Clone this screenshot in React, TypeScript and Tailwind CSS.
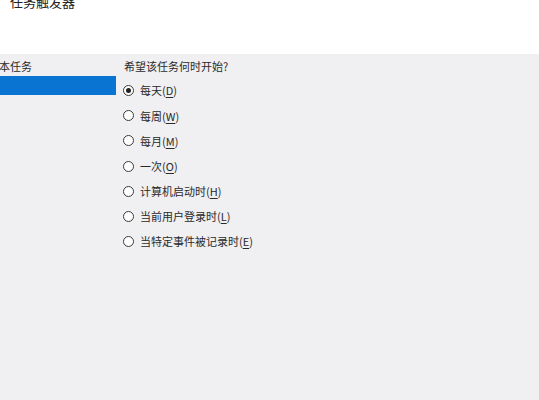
const options = [
  { label: "每天", key: "D", checked: true },
  { label: "每周", key: "W" },
  { label: "每月", key: "M" },
  { label: "一次", key: "O" },
  { label: "计算机启动时", key: "H" },
  { label: "当前用户登录时", key: "L" },
  { label: "当特定事件被记录时", key: "E" },
];

const font = { fontFamily: '"Noto Sans CJK SC", "Liberation Sans", sans-serif' };

export default function App() {
  return (
    <div
      style={font}
      className="w-[539px] h-[400px] overflow-hidden bg-[#f0eff1] text-[#2a2a2a] flex flex-col"
    >
      {/* header */}
      <div className="h-[54px] bg-white shrink-0 relative">
        <div className="absolute left-[10px] top-[-6px] text-[13px] leading-[16px] text-[#222]">
          任务触发器
        </div>
      </div>

      <div className="flex flex-1">
        {/* left nav */}
        <div className="w-[116px] shrink-0 pt-[4px]">
          <div className="text-[11px] leading-[16px] -ml-[1px]">本任务</div>
          <div className="h-[19px] mt-[2px] bg-[#0a74d2]" />
        </div>

        {/* content */}
        <div className="pl-[7px] pt-[4px]">
          <div className="text-[11px] leading-[16px] pl-[1px]">希望该任务何时开始?</div>
          <div className="flex flex-col mt-[4px]">
            {options.map((o) => (
              <label key={o.key} className="flex items-center h-[25.2px] gap-[6px] text-[11px]">
                <span className="w-[11px] h-[11px] rounded-full border border-[#3a3a3a] bg-white flex items-center justify-center">
                  {o.checked && <span className="w-[5px] h-[5px] rounded-full bg-[#222]" />}
                </span>
                <span>
                  {o.label}(<span className="underline underline-offset-2">{o.key}</span>)
                </span>
              </label>
            ))}
          </div>
        </div>
      </div>
    </div>
  );
}
